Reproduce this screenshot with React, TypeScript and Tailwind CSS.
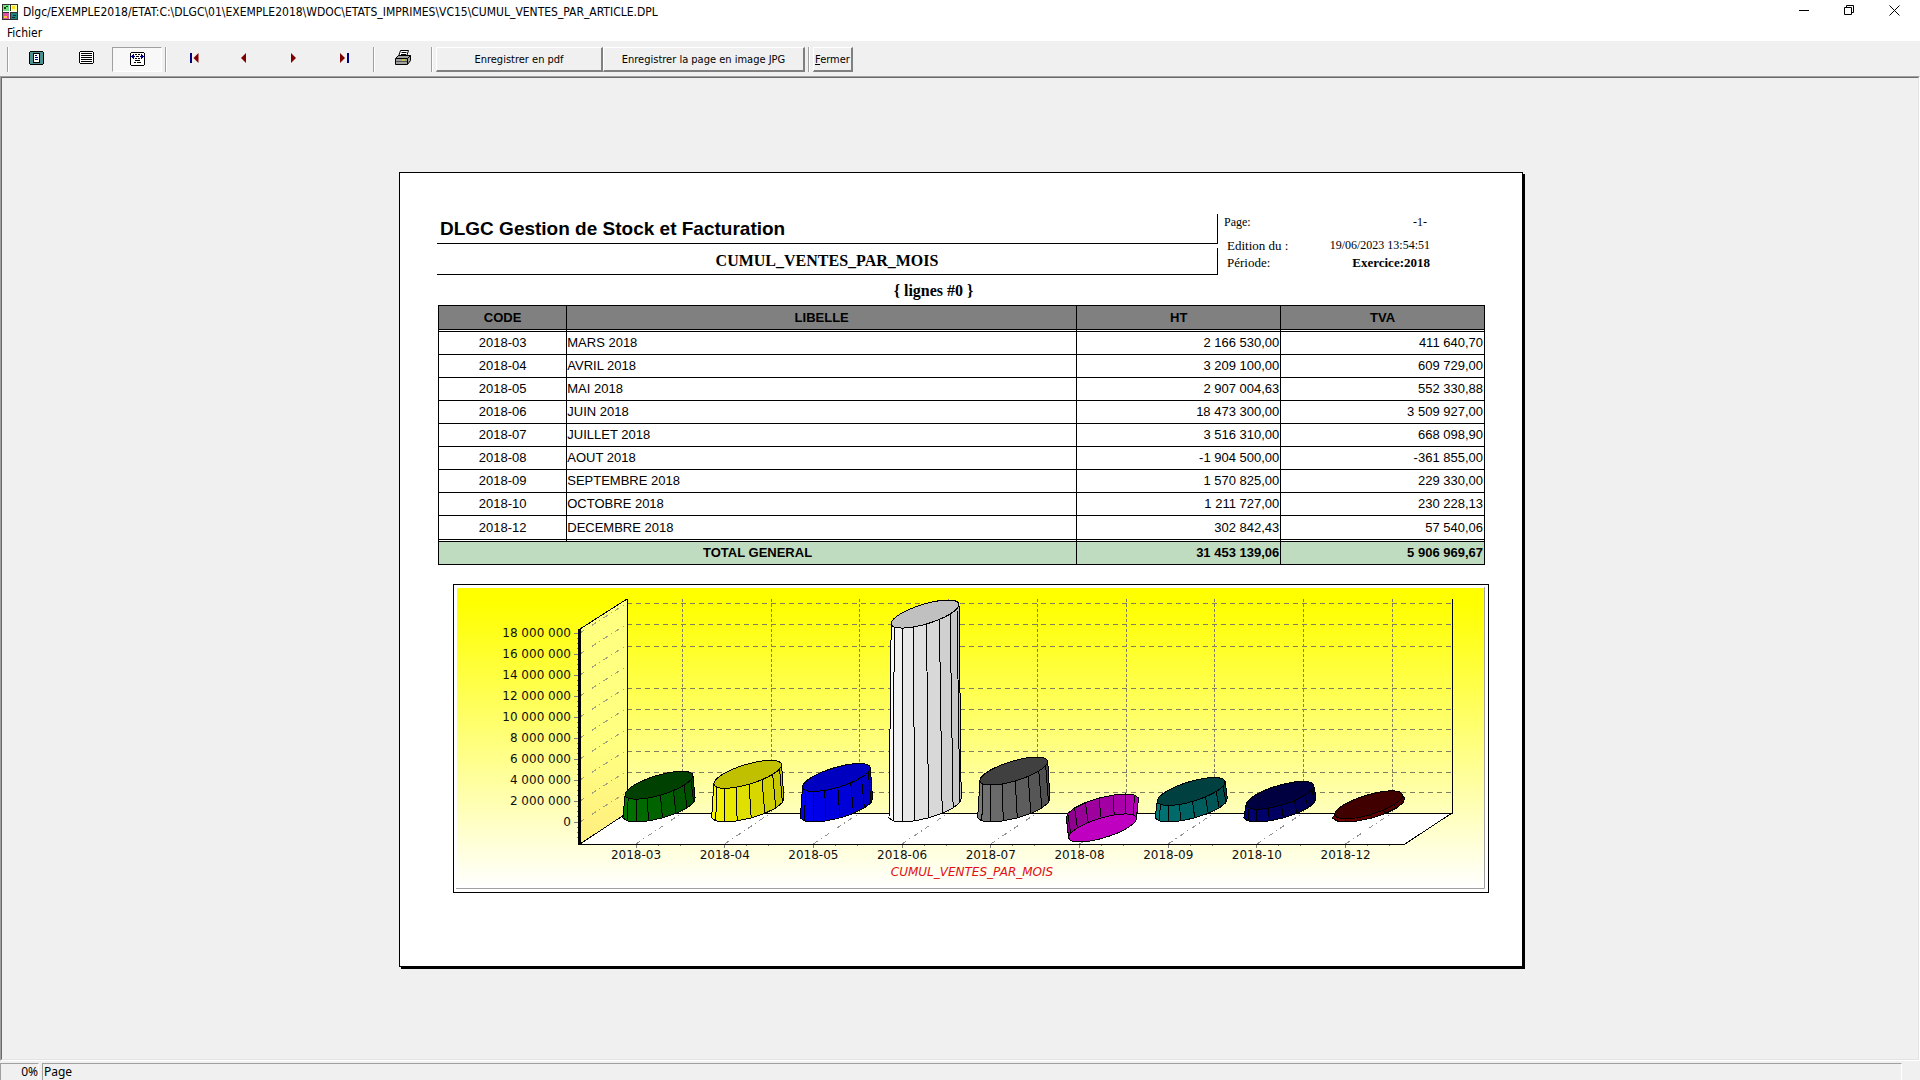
import React from "react";

const rows = [
  { code: "2018-03", label: "MARS 2018", ht: "2 166 530,00", tva: "411 640,70" },
  { code: "2018-04", label: "AVRIL 2018", ht: "3 209 100,00", tva: "609 729,00" },
  { code: "2018-05", label: "MAI 2018", ht: "2 907 004,63", tva: "552 330,88" },
  { code: "2018-06", label: "JUIN 2018", ht: "18 473 300,00", tva: "3 509 927,00" },
  { code: "2018-07", label: "JUILLET 2018", ht: "3 516 310,00", tva: "668 098,90" },
  { code: "2018-08", label: "AOUT 2018", ht: "-1 904 500,00", tva: "-361 855,00" },
  { code: "2018-09", label: "SEPTEMBRE 2018", ht: "1 570 825,00", tva: "229 330,00" },
  { code: "2018-10", label: "OCTOBRE 2018", ht: "1 211 727,00", tva: "230 228,13" },
  { code: "2018-12", label: "DECEMBRE 2018", ht: "302 842,43", tva: "57 540,06" },
];

type Rgb = [number, number, number];

const series: { code: string; value: number; lit: Rgb; dark: Rgb; cap: string }[] = [
  { code: "2018-03", value: 2.17, lit: [0, 120, 0], dark: [0, 72, 0], cap: "#004000" },
  { code: "2018-04", value: 3.21, lit: [248, 248, 0], dark: [192, 192, 0], cap: "#c0c000" },
  { code: "2018-05", value: 2.91, lit: [0, 0, 248], dark: [0, 0, 192], cap: "#0000c0" },
  { code: "2018-06", value: 18.47, lit: [248, 248, 248], dark: [192, 192, 192], cap: "#c0c0c0" },
  { code: "2018-07", value: 3.52, lit: [120, 120, 120], dark: [72, 72, 72], cap: "#404040" },
  { code: "2018-08", value: -1.9, lit: [184, 0, 184], dark: [136, 0, 136], cap: "#c000c0" },
  { code: "2018-09", value: 1.57, lit: [0, 120, 120], dark: [0, 72, 72], cap: "#004040" },
  { code: "2018-10", value: 1.21, lit: [0, 0, 120], dark: [0, 0, 72], cap: "#000040" },
  { code: "2018-12", value: 0.3, lit: [120, 0, 0], dark: [72, 0, 0], cap: "#400000" },
];

const axisLabels = [
  "18 000 000",
  "16 000 000",
  "14 000 000",
  "12 000 000",
  "10 000 000",
  "8 000 000",
  "6 000 000",
  "4 000 000",
  "2 000 000",
  "0",
];

const tickX = (i: number) => 180 + i * 88.7;
const tickY = (i: number) => 46 + i * 21;

// point on the slanted ellipse of a cylinder, angle in degrees
const rim = (cx: number, cy: number, rx: number, angle: number) => {
  const t = (angle * Math.PI) / 180;
  return [cx + rx * Math.cos(t) + 23 * Math.sin(t), cy - 14 * Math.sin(t)];
};

const toPoints = (points: number[][]) => points.map((p) => p.map((n) => n.toFixed(1)).join(",")).join(" ");

function Cylinder({ index }: { index: number }) {
  const { value, lit, dark, cap } = series[index];
  const cx = tickX(index) + 23;
  const baseY = 221;
  const topY = baseY - value * 10.5;
  // a negative value hangs below the floor and shows its back faces
  const start = value < 0 ? 45 : -135;
  const faces = Array.from({ length: 8 }, (_, i) => {
    const a = start + i * 22.5;
    const fill = `rgb(${lit.map((c, n) => Math.round(c + ((dark[n] - c) * i) / 7)).join(",")})`;
    return {
      fill,
      points: toPoints([
        rim(cx, topY, 25, a),
        rim(cx, topY, 25, a + 22.5),
        rim(cx, baseY, 28, a + 22.5),
        rim(cx, baseY, 28, a),
      ]),
    };
  });
  const capPoints = toPoints(Array.from({ length: 32 }, (_, i) => rim(cx, topY, 25, i * 11.25)));

  return (
    <g stroke="#000" strokeWidth="1" strokeLinejoin="round" shapeRendering="crispEdges">
      {faces.map((face, i) => (
        <polygon key={i} points={face.points} fill={face.fill} />
      ))}
      <polygon points={capPoints} fill={cap} />
    </g>
  );
}

function Chart() {
  return (
    <svg viewBox="0 0 1029 302" className="block w-full h-auto" role="img" aria-label="CUMUL_VENTES_PAR_MOIS">
      <defs>
        <linearGradient id="sky" x1="0" y1="0" x2="0" y2="1">
          <stop offset="0.05" stopColor="#ffff00" />
          <stop offset="1" stopColor="#ffffff" />
        </linearGradient>
        <linearGradient id="wall" x1="0" y1="0" x2="0" y2="1">
          <stop offset="0" stopColor="#ffff80" />
          <stop offset="0.6" stopColor="#ffff80" />
          <stop offset="1" stopColor="#ffee80" />
        </linearGradient>
      </defs>
      <rect x="1" y="1" width="1027" height="300" fill="url(#sky)" />
      <path d="M0 301.5H1028.5V0" fill="none" stroke="#a0a0a0" />

      {/* back wall grid, the 12 000 000 line is not drawn */}
      <g stroke="#808060" strokeWidth="1" strokeDasharray="5 4" shapeRendering="crispEdges">
        {[16.5, 37.5, 59.5, 101.5, 122.5, 142.5, 164.5, 185.5, 205.5].map((y) => (
          <path key={y} d={`M171 ${y}H996`} />
        ))}
      </g>
      <g stroke="#808060" strokeWidth="1" strokeDasharray="3 2" shapeRendering="crispEdges">
        {series.map((s, i) => (
          <path key={s.code} d={`M${Math.round(tickX(i) + 46) + 0.5} 12V226`} />
        ))}
      </g>

      {/* floor and left wall */}
      <polygon points="124,257 171,226 996,226 949,257" fill="#fff" />
      <polygon points="124,42 171,12 171,226 124,257" fill="url(#wall)" />
      <g stroke="#a0a080" strokeWidth="1" strokeDasharray="5 4 1 4" fill="none" shapeRendering="crispEdges">
        {axisLabels.map((label, i) => (
          <path key={label} d={`M124 ${tickY(i)}L171 ${tickY(i) - 30}`} />
        ))}
      </g>
      <g stroke="#909090" strokeWidth="1" strokeDasharray="5 4 1 4" fill="none" shapeRendering="crispEdges">
        {series.map((s, i) => (
          <path key={s.code} d={`M${tickX(i)} 257L${tickX(i) + 46} 226`} />
        ))}
      </g>
      <g stroke="#000" fill="none" shapeRendering="crispEdges">
        <path d="M171.5 12V226.5H996.5V12" />
        <path d="M124 42L171 12M124 257L171 226M949 257L996 226" />
        <path d="M124 257.5H949" />
        <path d="M123.5 42V258" strokeWidth="3" />
      </g>

      {/* axis ticks */}
      <g stroke="#808080" shapeRendering="crispEdges">
        {axisLabels.map((label, i) => (
          <path key={label} d={`M118 ${tickY(i) + 0.5}h4M121 ${tickY(i) + 5.5}h1M121 ${tickY(i) + 10.5}h1M121 ${tickY(i) + 15.5}h1`} />
        ))}
        {series.map((s, i) => (
          <path key={s.code} d={`M${tickX(i)} 258v3M${tickX(i) + 22} 258v1M${tickX(i) + 44} 258v1`} />
        ))}
      </g>

      <g fontFamily="'DejaVu Sans', sans-serif" fontSize="12" fill="#101010">
        {axisLabels.map((label, i) => (
          <text key={label} x="115" y={tickY(i) + 4} textAnchor="end">
            {label}
          </text>
        ))}
        {series.map((s, i) => (
          <text key={s.code} x={tickX(i)} y="272" textAnchor="middle">
            {s.code}
          </text>
        ))}
        <text x="516" y="289" textAnchor="middle" fontStyle="italic" fill="#e01010">
          CUMUL_VENTES_PAR_MOIS
        </text>
      </g>

      {series.map((s, i) => (
        <Cylinder key={s.code} index={i} />
      ))}
    </svg>
  );
}

function AppIcon() {
  return (
    <svg viewBox="0 0 16 16" className="size-4" shapeRendering="crispEdges" aria-hidden="true">
      <path fill="#303030" d="M0 0h16v16H0z" />
      <path fill="#70e080" d="M1 1h6v6H1z" />
      <path fill="#ffffa0" d="M9 1h6v6H9z" />
      <path fill="#e050a0" d="M1 9h6v6H1z" />
      <path fill="#208080" d="M9 9h6v6H9z" />
      <path fill="#fff" d="M7 1h1v14H7zM1 7h14v1H1z" />
      <path fill="#104010" d="M2 3h2v2H2zM4 2h2v1H4z" />
      <path fill="#ffe020" d="M10 2h3v3h-3z" />
      <path fill="#ffc040" d="M2 12h3v2H2z" />
      <path fill="#103030" d="M11 11h3v1h-3zM10 13h3v1h-3z" />
    </svg>
  );
}

function FullPageIcon() {
  return (
    <svg width="15" height="14" viewBox="0 0 15 14" shapeRendering="crispEdges" aria-hidden="true">
      <path fill="#000" d="M1 0h13v1h1v12h-1v1H1v-1H0V1h1z" />
      <path fill="#4a9090" d="M1 1h13v12H1z" />
      <path fill="#000" d="M4 2h7v10H4z" />
      <path fill="#fff" d="M5 3h5v8H5z" />
      <path fill="#000080" d="M6 4h2v1H6zM6 6h3v1H6zM6 8h3v1H6z" />
    </svg>
  );
}

function PageWidthIcon() {
  return (
    <svg width="15" height="13" viewBox="0 0 15 13" shapeRendering="crispEdges" aria-hidden="true">
      <path fill="#000" d="M1 0h13v1h1v11h-1v1H1v-1H0V1h1z" />
      <path fill="#fff" d="M1 1h13v11H1z" />
      <path fill="#000" d="M2 2h11v1H2zM2 4h11v1H2zM2 6h11v1H2zM2 8h11v1H2zM2 10h11v1H2z" />
    </svg>
  );
}

function ZoomIcon() {
  return (
    <svg width="15" height="14" viewBox="0 0 15 14" shapeRendering="crispEdges" aria-hidden="true">
      <path fill="#000" d="M1 0h13v1h1v12h-1v1H1v-1H0V1h1z" />
      <path fill="#fff" d="M1 1h13v12H1z" />
      <path fill="#000080" d="M0 4h5v1H0zM2 3h1v3H2zM3 2h1v5H3zM10 4h5v1h-5zM12 3h1v3h-1zM11 2h1v5h-1z" />
      <path fill="#000" d="M5 2h2v1H5zM8 2h2v1H8zM6 4h3v1H6zM5 6h2v1H5zM8 6h2v1H8zM5 8h5v1H5zM4 10h2v1H4zM7 10h4v1H7z" />
    </svg>
  );
}

function PrinterIcon() {
  return (
    <svg width="17" height="15" viewBox="0 0 17 15" aria-hidden="true">
      <path d="M5.5 .5h8l-2 6h-8z" fill="#fff" stroke="#000" />
      <path d="M6.5 2.5h5M6 4.5h5" stroke="#000" />
      <path d="M.5 8.5L3.5 5.5h12v5l-3 4H.5z" fill="#a0a0a0" stroke="#000" />
      <path d="M1 8.5h11.5l3-3M12.5 8.5v5.5" stroke="#000" fill="none" />
      <path d="M1 11.5h11" stroke="#505050" />
      <path d="M7 10h3" stroke="#e0e000" />
    </svg>
  );
}

const PrevArrow = () => <path d="M5 0v10L0 5z" fill="#800000" />;
const NextArrow = () => <path d="M0 0v10l5-5z" fill="#800000" />;

const navButtons = [
  {
    label: "Première page",
    icon: (
      <svg width="9" height="10" aria-hidden="true">
        <path d="M0 0h2v10H0z" fill="#000080" />
        <g transform="translate(3.5 0)">
          <PrevArrow />
        </g>
      </svg>
    ),
  },
  {
    label: "Page précédente",
    icon: (
      <svg width="6" height="10" aria-hidden="true">
        <PrevArrow />
      </svg>
    ),
  },
  {
    label: "Page suivante",
    icon: (
      <svg width="6" height="10" aria-hidden="true">
        <NextArrow />
      </svg>
    ),
  },
  {
    label: "Dernière page",
    icon: (
      <svg width="9" height="10" aria-hidden="true">
        <NextArrow />
        <path d="M7 0h2v10H7z" fill="#000080" />
      </svg>
    ),
  },
];

const Separator = () => <div className="w-[2px] h-[25px] border-l border-l-[#a0a0a0] border-r border-r-white" />;

const toolButton = "w-[50px] h-[25px] flex items-center justify-center pr-[2px] pb-[4px]";
const textButton =
  "h-[25px] pt-[2px] whitespace-nowrap border-t border-l border-t-white border-l-white border-r-2 border-b-2 border-r-[#808080] border-b-[#808080] bg-[#f0f0f0]";
const windowButton = "w-[45px] h-[21px] flex items-center justify-center";

function TitleBar() {
  return (
    <header className="flex items-center justify-between h-6 bg-white">
      <div className="flex items-center gap-[5px] pl-[2px] min-w-0">
        <AppIcon />
        <h1 className="text-[12px] leading-4 whitespace-nowrap">
          {"Dlgc/EXEMPLE2018/ETAT:C:\\DLGC\\01\\EXEMPLE2018\\WDOC\\ETATS_IMPRIMES\\VC15\\CUMUL_VENTES_PAR_ARTICLE.DPL"}
        </h1>
      </div>
      <div className="flex self-start pr-[3px]">
        <button type="button" aria-label="Réduire" className={windowButton}>
          <svg width="11" height="11" aria-hidden="true">
            <path d="M0 5.5h10" stroke="#000" />
          </svg>
        </button>
        <button type="button" aria-label="Restaurer" className={windowButton}>
          <svg width="11" height="11" fill="none" stroke="#000" aria-hidden="true">
            <path d="M.5 2.5h7v7h-7zM2.5 2.5v-2h7v7h-2" />
          </svg>
        </button>
        <button type="button" aria-label="Fermer la fenêtre" className={windowButton}>
          <svg width="11" height="11" stroke="#000" aria-hidden="true">
            <path d="M.5 .5l10 10M10.5 .5l-10 10" />
          </svg>
        </button>
      </div>
    </header>
  );
}

function Toolbar() {
  return (
    <div role="toolbar" className="flex items-start gap-[3px] pl-[7px] pt-[6px] pb-[4px] text-[11px]">
      <Separator />
      <div className="flex">
        <button type="button" aria-label="Page entière" className={toolButton}>
          <FullPageIcon />
        </button>
        <button type="button" aria-label="Pleine largeur" className={toolButton}>
          <PageWidthIcon />
        </button>
        <button
          type="button"
          aria-label="Zoom"
          aria-pressed="true"
          className="w-[50px] h-[25px] flex items-center justify-center pb-px bg-[#f8f8f8] border-t border-l border-t-[#a0a0a0] border-l-[#a0a0a0] border-r border-b border-r-white border-b-white"
        >
          <ZoomIcon />
        </button>
      </div>
      <Separator />
      <div className="flex">
        {navButtons.map((button) => (
          <button key={button.label} type="button" aria-label={button.label} className={toolButton}>
            {button.icon}
          </button>
        ))}
      </div>
      <Separator />
      <button type="button" aria-label="Imprimer" className="w-[50px] h-[25px] flex items-center justify-center pb-[4px]">
        <PrinterIcon />
      </button>
      <Separator />
      <div className="flex">
        <button type="button" className={`${textButton} w-[167px]`}>
          Enregistrer en pdf
        </button>
        <button type="button" className={`${textButton} w-[202px]`}>
          Enregistrer la page en image JPG
        </button>
      </div>
      <Separator />
      <button type="button" className={`${textButton} w-[40px]`}>
        <span className="underline">F</span>ermer
      </button>
    </div>
  );
}

function ReportHeader() {
  return (
    <div className="grid grid-cols-[781fr_271fr] font-['Liberation_Serif',serif]">
      <div className="flex flex-col gap-1">
        <h2 className="h-[30px] pl-[3px] pt-[5px] border-b border-r border-black font-['Liberation_Sans',sans-serif] font-bold text-[19px] leading-5">
          DLGC Gestion de Stock et Facturation
        </h2>
        <p className="h-[27px] border-b border-r border-black text-center font-bold text-[16px] leading-[26px]">
          CUMUL_VENTES_PAR_MOIS
        </p>
      </div>
      <dl className="pl-[6px] pr-[59px] text-[13px] leading-[17px]">
        <div className="flex justify-between pr-[3px] mb-[6px] text-[12px]">
          <dt>Page:</dt>
          <dd>-1-</dd>
        </div>
        <div className="flex justify-between pl-[3px]">
          <dt>Edition du :</dt>
          <dd className="text-[12px]">19/06/2023 13:54:51</dd>
        </div>
        <div className="flex justify-between pl-[3px]">
          <dt>Période:</dt>
          <dd className="font-bold">Exercice:2018</dd>
        </div>
      </dl>
    </div>
  );
}

const headCell = "h-[27px] border-l border-t border-black border-b-3 [border-bottom-style:double] bg-[#808080] bg-clip-padding p-0 last:border-r";
const bodyCell =
  "h-[23px] border-l border-b border-black p-0 last:border-r group-last:h-[26px] group-last:border-b-3 group-last:[border-bottom-style:double]";
const totalCell = "h-[23px] border-l border-b border-black bg-[#c0dcc0] p-0 last:border-r";

function ReportTable() {
  return (
    <div className="pl-px pr-[4px]">
      <table className="w-full table-fixed border-separate border-spacing-0 text-[13px] leading-[20px] font-['Liberation_Sans',sans-serif]">
        <colgroup>
          <col className="w-[12.25%]" />
          <col className="w-[48.7%]" />
          <col className="w-[19.5%]" />
          <col />
        </colgroup>
        <thead>
          <tr>
            <th className={headCell}>CODE</th>
            <th className={headCell}>LIBELLE</th>
            <th className={headCell}>HT</th>
            <th className={headCell}>TVA</th>
          </tr>
        </thead>
        <tbody>
          {rows.map((row) => (
            <tr key={row.code} className="group">
              <td className={`${bodyCell} text-center`}>{row.code}</td>
              <td className={bodyCell}>{row.label}</td>
              <td className={`${bodyCell} pr-px text-right`}>{row.ht}</td>
              <td className={`${bodyCell} pr-px text-right`}>{row.tva}</td>
            </tr>
          ))}
        </tbody>
        <tfoot className="font-bold">
          <tr>
            <td colSpan={2} className={`${totalCell} text-center`}>
              TOTAL GENERAL
            </td>
            <td className={`${totalCell} pr-px text-right`}>31 453 139,06</td>
            <td className={`${totalCell} pr-px text-right`}>5 906 969,67</td>
          </tr>
        </tfoot>
      </table>
    </div>
  );
}

export default function App() {
  return (
    <div className="flex flex-col min-h-screen bg-[#f0f0f0] text-black font-['DejaVu_Sans_Condensed','DejaVu_Sans',sans-serif]">
      <TitleBar />
      <nav className="h-[17px] bg-white pl-[7px] text-[12px] leading-[19px]">
        <button type="button">Fichier</button>
      </nav>
      <Toolbar />

      <main className="flex flex-1 border border-t-[#a0a0a0] border-l-[#a0a0a0] border-r-white border-b-white">
        <div className="flex flex-1 items-center justify-center pt-[2px] pl-[2px] border border-t-[#696969] border-l-[#696969] border-r-[#e3e3e3] border-b-[#e3e3e3]">
          <article className="w-full max-w-[1124px] bg-white border border-black shadow-[2px_2px_0_#000] pt-[41px] pl-[37px] pr-[33px] pb-[73px]">
            <ReportHeader />
            <p className="h-[30px] pr-[59px] text-center font-['Liberation_Serif',serif] font-bold text-[16px] leading-[32px]">
              {"{ lignes #0 }"}
            </p>
            <ReportTable />
            <div className="mt-[19px] ml-4 border border-black pt-[2px] pl-[2px] pr-[3px] pb-[3px]">
              <Chart />
            </div>
          </article>
        </div>
      </main>

      <footer className="flex gap-[3px] pt-[2px] text-[12px] leading-[16px] font-['Noto_Sans',sans-serif]">
        <div className="w-[39px] h-[17px] text-right border-t border-t-[#a0a0a0] border-l border-l-[#a0a0a0] border-r border-r-white">0%</div>
        <div className="flex-1 mr-[18px] pl-px h-[17px] border-t border-t-[#a0a0a0] border-l border-l-[#a0a0a0] border-r border-r-white">Page</div>
      </footer>
    </div>
  );
}
